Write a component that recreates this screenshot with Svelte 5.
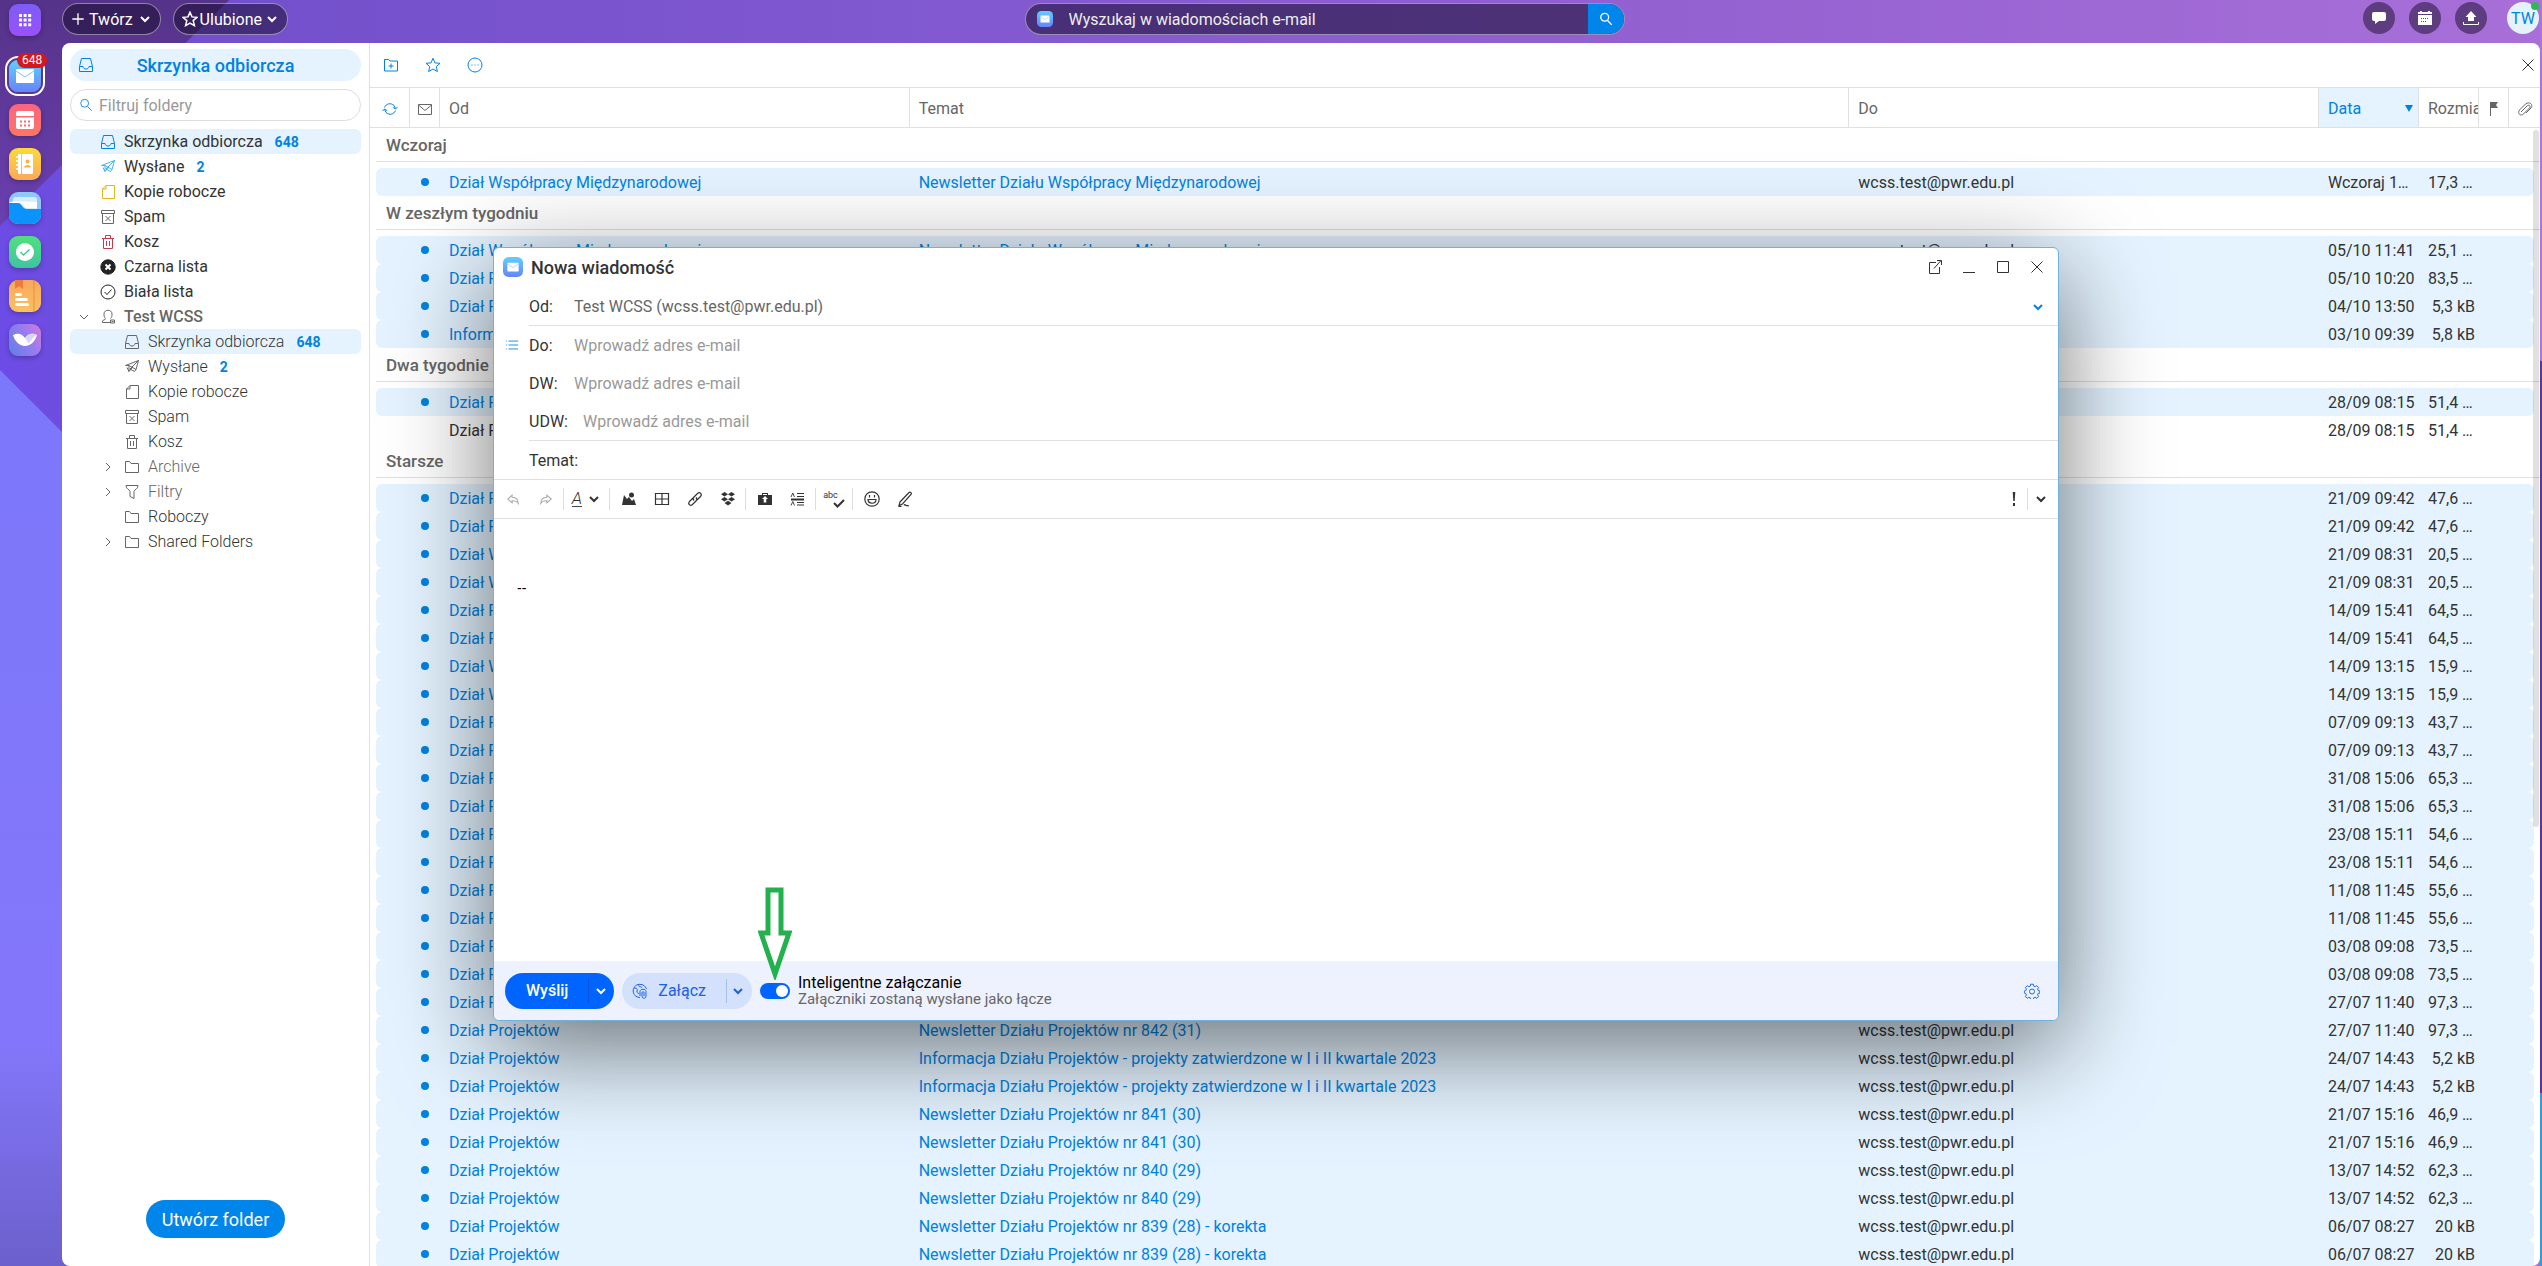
<script lang="ts">
	type Folder = {
		icon: string;
		label: string;
		level: number;
		count?: number;
		tone?: string;
		arrow?: 'down' | 'right';
		active?: boolean;
	};

	type Mail = {
		from: string;
		subject: string;
		date: string;
		size: string;
		read?: boolean;
	};

	// stroke paths on a 16x16 grid
	const icons: Record<string, string> = {
		inbox: 'M3.5 1.5h9l2 8v5h-13v-5zM1.5 9.5H5c.6 3.4 5.4 3.4 6 0h3.500',
		sent: 'M1.500 6.500 14.500 1.500l-2.500 9-7-4zM5 7v5.500l3-3.500M14.500 1.500 6 10l4.500 2.500 1.500-2M3 8.500l2 4',
		draft: 'M6 1.500h8.500v13h-12V5zM6 1.500V5H2.500',
		spam: 'M1.500 1.500h13v3h-13zM2.500 4.500h11v10h-11zM5.500 7l5 5M10.500 7l-5 5',
		trash: 'M2 4.500h12M5.500 4.500v-3h5v3M3.500 4.500v10h9v-10M6.500 7v5M9.500 7v5',
		allow: 'M8 1a7 7 0 1 0 0 14A7 7 0 0 0 8 1zM4.500 8l2.500 2.500 4.500-5',
		account: 'M10 13.500H2.500v-1.500c0-1 3-1 3-2.500C4 8 4 6.500 4 5c0-5 8-5 8 0 0 2 0 3-1.500 4.500M10.500 11h4v3h-4zM11.500 12.500h2',
		folder: 'M1.500 2.500h4l1.500 2h7.500v9h-13z',
		filter: 'M2 1.500h12c0 4-4 4-4 6v7l-4-2v-5c0-2-4-2-4-6z',
		addFolder: 'M1.500 2.500h4l1.500 1.500h7.500v10h-13zM8 6.500v5M5.500 9h5',
		star: 'M8 1.200l2 4.700 5 .4-3.800 3.300 1.200 5L8 12l-4.400 2.600 1.200-5L1 6.300l5-.4z',
		more: 'M8 1a7 7 0 1 0 0 14A7 7 0 0 0 8 1zM4.500 8h1M7.500 8h1M10.500 8h1',
		refresh: 'M2.500 6.500C4 2.500 9 1.500 12 4.500l1.500 3M13.500 9.500c-1.500 4-6.500 5-9.500 2l-1.500-3M11 6.500l2.500 1.500L15.500 6M.500 10l2-2 2.500 1.500',
		mail: 'M1.500 3.500h13v10h-13zM1.500 4 8 9.500 14.500 4',
		search: 'M6.500 1.500a4.500 4.500 0 1 0 0 9 4.500 4.500 0 0 0 0-9zM10 10l4.500 4.500',
		clip: 'M4 11l6-6c2-2 4 0 2.500 2l-6 6c-3 2.500-6.500-.5-4-4l6-6c4-3 8 .5 5.500 4l-5 5',
		close: 'M2.500 2.500l11 11M13.500 2.500l-11 11',
		popout: 'M9 3.500H2.500v11h10V8M7 9.500l7-8M10 1.500h4.500V6',
		minimise: 'M2 13.500h12',
		maximise: 'M2.500 2.500h11v11h-11z',
		down: 'M4 6l4 4 4-4',
		right: 'M6 4l4 4-4 4',
		plus: 'M8 1.500v13M1.500 8h13',
		list: 'M1 3.500h1M4 3.500h11M1 8h1M4 8h11M1 12.500h1M4 12.500h11',
		undo: 'M7 3.500 2 8l5 4.500V10c4 0 5.500.5 7 3 0-4-2.500-7-7-7z',
		redo: 'M9 3.500 14 8l-5 4.500V10c-4 0-5.500.5-7 3 0-4 2.500-7 7-7z',
		table: 'M1.500 2.500h13v11h-13zM8 2.500v11M1.500 8h13',
		link: 'M7 9.500c-1-1-1-2.500 0-3.500l3.500-3.500c2.500-2 5 .5 3 3L10 9M9 6.500c1 1 1 2.500 0 3.500l-3.500 3.500c-2.500 2-5-.5-3-3L6 7',
		emoji: 'M8 .8a7.200 7.200 0 1 0 0 14.400A7.200 7.200 0 0 0 8 .8zM4 8.500h8c0 5-8 5-8 0zM5.500 4v2.500M10.500 4v2.500',
		pen: 'M3 11l9-9.500c1.500-1 3 .5 2 2L5.500 13 2 14.500zM1.500 15.300h3M7 14.500c1-2 2 .5 3 0l2 .500',
		attach: 'M8 14.500C-1 14-1 2 7.500 1.300c4 0 6 2 7 4.700M2 5c3 0 4 1 3 3s2 2 2 3M7 1.500c-1 3 2 2 3 3M8 13V8.500c0-3 6-3 6 0v4.500c0 3-4 3-4 0V9.500c0-1 2-1 2 0v3.500',
		gear: 'M6.700 1.200h2.600l.4 1.900 1.500.6 1.600-1 1.800 1.800-1 1.600.6 1.500 1.800.4v2l-1.800.4-.6 1.500 1 1.600-1.800 1.800-1.600-1-1.500.6-.4 1.800H6.700l-.4-1.800-1.500-.6-1.600 1-1.800-1.800 1-1.600-.6-1.500L.2 10V8l1.600-.4.6-1.500-1-1.600 1.800-1.800 1.600 1 1.500-.6zM8 6a2.500 2.500 0 1 0 0 5 2.500 2.500 0 0 0 0-5z'
	};

	const folders: Folder[] = [
		{ icon: 'inbox', label: 'Skrzynka odbiorcza', level: 0, count: 648, tone: 'blue', active: true },
		{ icon: 'sent', label: 'Wysłane', level: 0, count: 2, tone: 'sky' },
		{ icon: 'draft', label: 'Kopie robocze', level: 0, tone: 'yellow' },
		{ icon: 'spam', label: 'Spam', level: 0 },
		{ icon: 'trash', label: 'Kosz', level: 0, tone: 'red' },
		{ icon: 'block', label: 'Czarna lista', level: 0, tone: 'dark' },
		{ icon: 'allow', label: 'Biała lista', level: 0, tone: 'dark' },
		{ icon: 'account', label: 'Test WCSS', level: 0, tone: 'account', arrow: 'down' },
		{ icon: 'inbox', label: 'Skrzynka odbiorcza', level: 1, count: 648, active: true },
		{ icon: 'sent', label: 'Wysłane', level: 1, count: 2 },
		{ icon: 'draft', label: 'Kopie robocze', level: 1 },
		{ icon: 'spam', label: 'Spam', level: 1 },
		{ icon: 'trash', label: 'Kosz', level: 1 },
		{ icon: 'folder', label: 'Archive', level: 1, tone: 'muted', arrow: 'right' },
		{ icon: 'filter', label: 'Filtry', level: 1, tone: 'muted', arrow: 'right' },
		{ icon: 'folder', label: 'Roboczy', level: 1 },
		{ icon: 'folder', label: 'Shared Folders', level: 1, arrow: 'right' }
	];

	const projects = 'Dział Projektów';
	const abroad = 'Dział Współpracy Międzynarodowej';
	const abroadNews = 'Newsletter Działu Współpracy Międzynarodowej';
	const projectNews = 'Newsletter Działu Projektów';
	const contests = 'Informacja Działu Projektów - projekty zatwierdzone w I i II kwartale 2023';

	function twice(from: string, subject: string, date: string, size: string): Mail[] {
		const mail = { from, subject, date, size };
		return [mail, { ...mail }];
	}

	const groups: { title: string; mails: Mail[] }[] = [
		{
			title: 'Wczoraj',
			mails: [{ from: abroad, subject: abroadNews, date: 'Wczoraj 1…', size: '17,3 …' }]
		},
		{
			title: 'W zeszłym tygodniu',
			mails: [
				{ from: abroad, subject: abroadNews, date: '05/10 11:41', size: '25,1 …' },
				{ from: projects, subject: projectNews, date: '05/10 10:20', size: '83,5 …' },
				{ from: projects, subject: projectNews, date: '04/10 13:50', size: '5,3 kB' },
				{ from: 'Informacje', subject: 'Informacje', date: '03/10 09:39', size: '5,8 kB' }
			]
		},
		{
			title: 'Dwa tygodnie temu',
			mails: [
				{ from: projects, subject: projectNews, date: '28/09 08:15', size: '51,4 …' },
				{ from: projects, subject: projectNews, date: '28/09 08:15', size: '51,4 …', read: true }
			]
		},
		{
			title: 'Starsze',
			mails: [
				...twice(projects, projectNews, '21/09 09:42', '47,6 …'),
				...twice(abroad, abroadNews, '21/09 08:31', '20,5 …'),
				...twice(projects, projectNews, '14/09 15:41', '64,5 …'),
				...twice(abroad, abroadNews, '14/09 13:15', '15,9 …'),
				...twice(projects, projectNews, '07/09 09:13', '43,7 …'),
				...twice(projects, projectNews, '31/08 15:06', '65,3 …'),
				...twice(projects, projectNews, '23/08 15:11', '54,6 …'),
				...twice(projects, projectNews, '11/08 11:45', '55,6 …'),
				...twice(projects, projectNews, '03/08 09:08', '73,5 …'),
				...twice(projects, 'Newsletter Działu Projektów nr 842 (31)', '27/07 11:40', '97,3 …'),
				...twice(projects, contests, '24/07 14:43', '5,2 kB'),
				...twice(projects, 'Newsletter Działu Projektów nr 841 (30)', '21/07 15:16', '46,9 …'),
				...twice(projects, 'Newsletter Działu Projektów nr 840 (29)', '13/07 14:52', '62,3 …'),
				...twice(projects, 'Newsletter Działu Projektów nr 839 (28) - korekta', '06/07 08:27', '20 kB')
			]
		}
	];

	let search = $state('');
	let folderFilter = $state('');
	let smartAttach = $state(true);
	let body = $state('\n\n--');
</script>

{#snippet icon(name: string, size: number = 16)}
	<svg class="icon" width={size} height={size} viewBox="0 0 16 16" aria-hidden="true">
		{#if name === 'block'}
			<circle cx="8" cy="8" r="7.200" fill="currentColor" />
			<path d="M5.500 5.500l5 5M10.500 5.500l-5 5" stroke="#fff" stroke-width="2" />
		{:else}
			<path d={icons[name]} />
		{/if}
	</svg>
{/snippet}

{#snippet mailLogo(size: number)}
	<svg width={size} height={size} viewBox="0 0 32 32" aria-hidden="true">
		<defs>
			<linearGradient id="mail-{size}" x1="0" y1="0" x2="0" y2="1">
				<stop offset="0" stop-color="#5fd0fb" />
				<stop offset="1" stop-color="#6684f8" />
			</linearGradient>
		</defs>
		<rect width="32" height="32" rx="9" fill="url(#mail-{size})" />
		<rect x="7" y="9" width="18" height="14" rx="1" fill="#fff" />
		<path d="M7 11l9 6 9-6" fill="none" stroke="#8fbcf8" />
	</svg>
{/snippet}

<div class="desktop">
	<svg class="wallpaper" width="300" height="2000" aria-hidden="true">
		<defs>
			<linearGradient id="dusk" x1="0" y1="0" x2="0" y2="1">
				<stop offset="0" stop-color="#553388" />
				<stop offset="1" stop-color="#6a3fb0" />
			</linearGradient>
			<linearGradient id="dawn" gradientUnits="userSpaceOnUse" x1="0" y1="370" x2="0" y2="1266">
				<stop offset="0" stop-color="#7c78fb" />
				<stop offset="0.750" stop-color="#8476fa" />
				<stop offset="1" stop-color="#6c60cc" />
			</linearGradient>
		</defs>
		<path d="M0 0h229L0 226z" fill="url(#dusk)" />
		<path d="M0 370l300 300v1330H0z" fill="url(#dawn)" />
	</svg>

	<nav class="rail" aria-label="Aplikacje">
		<button class="app launcher" aria-label="Menu">
			<svg width="32" height="32" viewBox="0 0 32 32" fill="#fff">
				{#each [10, 14.6, 19.2] as y}
					{#each [10, 14.6, 19.2] as x}
						<rect {x} {y} width="3" height="3" rx="0.500" />
					{/each}
				{/each}
			</svg>
		</button>
		<button class="app current" aria-label="Poczta">
			{@render mailLogo(32)}
			<span class="unread">648</span>
		</button>
		<button class="app calendar" aria-label="Kalendarz">
			<svg width="32" height="32" viewBox="0 0 32 32" fill="#fff">
				<path d="M7 9a2 2 0 0 1 2-2h14a2 2 0 0 1 2 2v3H7zM7 13.500h18V23a2 2 0 0 1-2 2H9a2 2 0 0 1-2-2z" />
				<path d="M11 17.500h12M11 21.500h12" stroke="#fc6a72" stroke-width="2" stroke-dasharray="2 2" />
			</svg>
		</button>
		<button class="app contacts" aria-label="Kontakty">
			<svg width="32" height="32" viewBox="0 0 32 32" fill="#fff">
				<rect x="9" y="6" width="3" height="20" />
				<rect x="13" y="6" width="11" height="20" rx="1" />
				<path d="M7 9h4M7 13h4M7 17h4M7 21h4" stroke="#fff" stroke-width="1.500" />
				<circle cx="18.500" cy="13.500" r="2" fill="#fbb13c" />
				<path d="M15 19.500c0-3.500 7-3.500 7 0z" fill="#fbb13c" />
			</svg>
		</button>
		<button class="app files" aria-label="Pliki">
			<svg width="32" height="32" viewBox="0 0 32 32">
				<path d="M4 8a3 3 0 0 1 3-3h18a3 3 0 0 1 3 3v9H4z" fill="#d6ebfc" />
				<path d="M0 11h11l6 5h11v-6l-24-1z" fill="#fff" />
				<path d="M0 11h9c4 0 4 6 9 6h14v6a9 9 0 0 1-9 9H9a9 9 0 0 1-9-9z" fill="#0a94fb" />
			</svg>
		</button>
		<button class="app tasks" aria-label="Zadania">
			<svg width="32" height="32" viewBox="0 0 32 32">
				<circle cx="16" cy="16" r="9" fill="#fff" />
				<path d="M11.500 16l3 3 6-5.500" fill="none" stroke="#3fcf94" stroke-width="1.500" />
			</svg>
		</button>
		<button class="app notes" aria-label="Notatki">
			<svg width="32" height="32" viewBox="0 0 32 32">
				<path d="M25 0v32" stroke="#e98f3c" />
				<path d="M6 0h8v9l-4-3-4 3z" fill="#ee7c3b" />
				<path d="M7.500 14.500h4M7.500 19.500h10M7.500 24.500h11" stroke="#fff" stroke-width="3" stroke-linecap="round" />
			</svg>
		</button>
		<button class="app chat" aria-label="Czat">
			<svg width="32" height="32" viewBox="0 0 32 32">
				<path d="M4 11c5-2 8-2 12 3 4-5 7-5 12-3-2 7-7 11-12 11S6 18 4 11z" fill="#fff" />
				<path d="M16 14c4-5 7-5 12-3-4 2-7 6-8 9z" fill="#d9d4fb" />
			</svg>
		</button>
	</nav>

	<div class="workspace">
		<header class="topbar">
			<div class="topbar-left">
				<button class="pill">{@render icon('plus', 14)} Twórz {@render icon('down')}</button>
				<button class="pill favourites">{@render icon('star')}Ulubione {@render icon('down')}</button>
			</div>
			<form class="search">
				{@render mailLogo(16)}
				<input type="text" aria-label="Szukaj" placeholder="Wyszukaj w wiadomościach e-mail" bind:value={search} />
				<button type="button" aria-label="Wyszukaj">{@render icon('search', 14)}</button>
			</form>
			<div class="topbar-right">
				<button class="round" aria-label="Czat">
					<svg width="16" height="16" viewBox="0 0 16 16"><path d="M3 2h10a2 2 0 0 1 2 2v5a2 2 0 0 1-2 2H8l-4 3v-3H3a2 2 0 0 1-2-2V4a2 2 0 0 1 2-2z" fill="#fff" /></svg>
				</button>
				<button class="round" aria-label="Kalendarz">
					<svg width="16" height="16" viewBox="0 0 16 16">
						<path d="M1 2h14v2H1zM1 5h14v10H1zM3 1h2v2H3zM11 1h2v2h-2z" fill="#fff" />
						<path d="M4 8.500h8M4 11.500h6" stroke="#5b3d80" stroke-dasharray="1 1" />
					</svg>
				</button>
				<button class="round" aria-label="Wyślij plik">
					<svg width="16" height="16" viewBox="0 0 16 16">
						<path d="M8 1l5.500 6H11v4H5V7H2.500z" fill="#fff" />
						<path d="M.5 12v2.500h15V12" fill="none" stroke="#fff" />
					</svg>
				</button>
				<button class="avatar">TW<span class="online"></span></button>
			</div>
		</header>

		<main class="panel">
			<aside class="sidebar">
				<h1 class="mailbox">{@render icon('inbox')}<span>Skrzynka odbiorcza</span></h1>
				<label class="filter">
					{@render icon('search', 14)}
					<input type="text" aria-label="Filtruj foldery" placeholder="Filtruj foldery" bind:value={folderFilter} />
				</label>
				<ul class="folders">
					{#each folders as folder}
						<li class="folder level-{folder.level} {folder.tone ?? ''}" class:active={folder.active}>
							<span class="arrow">
								{#if folder.arrow}{@render icon(folder.arrow)}{/if}
							</span>
							{@render icon(folder.icon)}
							<span class="label">{folder.label}</span>
							{#if folder.count}
								<span class="count" class:single={folder.count < 10}>{folder.count}</span>
							{/if}
						</li>
					{/each}
				</ul>
				<button class="create-folder">Utwórz folder</button>
			</aside>

			<section class="mails">
				<div class="toolbar">
					<button aria-label="Nowy folder">{@render icon('addFolder')}</button>
					<button aria-label="Dodaj do ulubionych">{@render icon('star')}</button>
					<button aria-label="Więcej">{@render icon('more')}</button>
					<button class="close-tab" aria-label="Zamknij">{@render icon('close')}</button>
				</div>

				<table>
					<colgroup>
						<col class="w-edge" />
						<col class="w-refresh" />
						<col class="w-mark" />
						<col />
						<col class="w-subject" />
						<col />
						<col class="w-date" />
						<col class="w-size" />
						<col class="w-mark" />
						<col class="w-clip" />
						<col class="w-edge" />
					</colgroup>
					<thead>
						<tr>
							<th colspan="2" class="mid blue">{@render icon('refresh')}</th>
							<th class="mid">{@render icon('mail')}</th>
							<th>Od</th>
							<th>Temat</th>
							<th>Do</th>
							<th class="sorted"><span class="sort">Data <span class="triangle"></span></span></th>
							<th>Rozmiar</th>
							<th class="mid">
								<svg width="16" height="16" viewBox="0 0 16 16"><path d="M4 1h8l-2 3 2 3H5v8H4z" fill="#666" /></svg>
							</th>
							<th colspan="2" class="mid">{@render icon('clip')}</th>
						</tr>
					</thead>
					<tbody>
						{#each groups as group}
							<tr class="group">
								<td></td>
								<td colspan="10"><div class="group-title">{group.title}</div></td>
							</tr>
							{#each group.mails as mail}
								<tr class="mail" class:read={mail.read}>
									<td class="edge"></td>
									<td class="first"></td>
									<td class="mark">
										{#if !mail.read}<span class="dot"></span>{/if}
									</td>
									<td class="from">{mail.from}</td>
									<td class="subject">{mail.subject}</td>
									<td>wcss.test@pwr.edu.pl</td>
									<td>{mail.date}</td>
									<td class="size" class:whole={!mail.size.endsWith('…')}>{mail.size}</td>
									<td></td>
									<td class="last"></td>
									<td class="edge"></td>
								</tr>
							{/each}
						{/each}
					</tbody>
				</table>
				<div class="scroll-thumb"></div>
			</section>
		</main>
	</div>

	<div class="compose" role="dialog" aria-labelledby="compose-title">
		<div class="titlebar">
			{@render mailLogo(20)}
			<h2 id="compose-title">Nowa wiadomość</h2>
			<div class="window-buttons">
				<button aria-label="Otwórz w nowym oknie">{@render icon('popout')}</button>
				<button aria-label="Minimalizuj">{@render icon('minimise')}</button>
				<button aria-label="Maksymalizuj">{@render icon('maximise')}</button>
				<button aria-label="Zamknij okno">{@render icon('close')}</button>
			</div>
		</div>

		<div class="fields">
			<div class="field from-field">
				<span class="field-label">Od:</span>
				<span class="sender">Test WCSS (wcss.test@pwr.edu.pl)</span>
				<button class="open-list" aria-label="Wybierz nadawcę">{@render icon('down')}</button>
			</div>
			<div class="recipients">
				<button class="contacts-list" aria-label="Lista kontaktów">{@render icon('list', 14)}</button>
				<div class="field">
					<label for="to">Do:</label>
					<input id="to" type="text" placeholder="Wprowadź adres e-mail" />
				</div>
				<div class="field">
					<label for="cc">DW:</label>
					<input id="cc" type="text" placeholder="Wprowadź adres e-mail" />
				</div>
				<div class="field">
					<label for="bcc">UDW:</label>
					<input id="bcc" type="text" placeholder="Wprowadź adres e-mail" />
				</div>
			</div>
			<div class="field subject-field">
				<label for="subject">Temat:</label>
				<input id="subject" type="text" />
			</div>
		</div>

		<div class="format">
			<button class="faded" aria-label="Cofnij">{@render icon('undo', 14)}</button>
			<button class="faded" aria-label="Ponów">{@render icon('redo', 14)}</button>
			<span class="sep"></span>
			<button class="font-button" aria-label="Czcionka"><i>A</i>{@render icon('down')}</button>
			<span class="sep"></span>
			<button aria-label="Obraz">
				<svg width="16" height="16" viewBox="0 0 16 16" fill="currentColor"><path d="M1 14 3 4l3 4 2-2 3 4 2-2 2 6z" /><circle cx="10.500" cy="4" r="2.500" /></svg>
			</button>
			<button aria-label="Tabela">{@render icon('table')}</button>
			<button aria-label="Odnośnik">{@render icon('link')}</button>
			<button aria-label="Dropbox">
				<svg width="16" height="16" viewBox="0 0 16 16" fill="currentColor"><path d="M4.500 1 8 3.300 4.500 5.600 1 3.300zM11.500 1 15 3.300l-3.500 2.300L8 3.300zM4.500 6 8 8.300l-3.500 2.300L1 8.300zM11.500 6 15 8.300l-3.500 2.300L8 8.300zM8 9.800l3.500 2.200L8 14.500 4.500 12z" /></svg>
			</button>
			<span class="sep"></span>
			<button aria-label="Wstaw plik">
				<svg width="16" height="16" viewBox="0 0 16 16"><path d="M1 4h4V2h6v2h4v10H1zM6 3v1h4V3z" fill="currentColor" fill-rule="evenodd" /><path d="M8 5l3 3H9.300v3.500H6.700V8H5z" fill="#fff" /></svg>
			</button>
			<button aria-label="Styl">
				<svg width="16" height="16" viewBox="0 0 16 16" fill="none" stroke="currentColor"><path d="M1 6l1.800-4L4.500 6M1 14.500l1.800-4 1.700 4" stroke-width="0.900" /><path d="M7 2.500h7M7 5.500h7M7 11.500h7M7 14h7" /><path d="M1 8.500h13" stroke-width="2" /></svg>
			</button>
			<span class="sep"></span>
			<button class="spell" aria-label="Sprawdź pisownię">
				<span>abc</span>
				<svg width="12" height="9" viewBox="0 0 12 9"><path d="M1 4l3.500 3.500L11 1" fill="none" stroke="currentColor" stroke-width="2" /></svg>
			</button>
			<span class="sep"></span>
			<button aria-label="Emotikony">{@render icon('emoji')}</button>
			<button aria-label="Podpis">{@render icon('pen')}</button>
			<button class="priority" aria-label="Ważność">
				<svg width="4" height="14" viewBox="0 0 4 14" fill="currentColor"><path d="M.7 0h2.600L2.700 9H1.300zM1 11h2v3H1z" /></svg>
			</button>
			<span class="sep"></span>
			<button aria-label="Więcej opcji">{@render icon('down')}</button>
		</div>

		<textarea class="body" aria-label="Treść" bind:value={body}></textarea>

		<footer class="actions">
			<div class="split primary">
				<button>Wyślij</button>
				<button class="more" aria-label="Opcje wysyłania">{@render icon('down')}</button>
			</div>
			<div class="split secondary">
				<button>{@render icon('attach')}Załącz</button>
				<button class="more" aria-label="Opcje załączania">{@render icon('down')}</button>
			</div>
			<label class="smart">
				<input type="checkbox" role="switch" bind:checked={smartAttach} />
				<span>
					<span class="smart-title">Inteligentne załączanie</span>
					<span class="smart-note">Załączniki zostaną wysłane jako łącze</span>
				</span>
			</label>
			<button class="settings" aria-label="Ustawienia">{@render icon('gear')}</button>

			<!-- hand-drawn pointer to the switch -->
			<svg class="pointer" width="34" height="94" viewBox="0 0 34 94" aria-hidden="true">
				<path d="M10 4h13v43h8L17 88 3 47h7z" />
			</svg>
		</footer>
	</div>
</div>

<style>
	:global(body) {
		margin: 0;
		overflow: hidden;
	}

	.desktop,
	.desktop :is(button, input, textarea) {
		font-family: Roboto, 'Noto Sans', sans-serif;
		font-size: 16px;
		color: #333;
	}

	.desktop {
		--blue: #0082e0;
		--tint: #e4f3ff;
		--line: #e0e0e0;
		position: relative;
		display: flex;
		height: 100vh;
		overflow: hidden;
		background:
			linear-gradient(#ad72dc 0 361px, #5a359a 361px 1093px, #349ad8 1093px) right / 2px 100% no-repeat,
			linear-gradient(90deg, #6c4ce6 0, #7350cc 240px, #8058d0 900px, #9260d0 1600px, #a86fd8 100%);
	}

	button {
		display: inline-flex;
		align-items: center;
		justify-content: center;
		padding: 0;
		border: 0;
		background: none;
		cursor: pointer;
	}

	input,
	textarea {
		min-width: 0;
		padding: 0;
		border: 0;
		outline: 0;
		background: none;
	}

	input::placeholder {
		color: #999;
		opacity: 1;
	}

	.icon {
		flex: none;
		fill: none;
		stroke: currentColor;
	}

	.wallpaper {
		position: absolute;
		top: 0;
		left: 0;
	}

	/* app rail */
	.rail {
		position: relative;
		display: flex;
		flex: none;
		flex-direction: column;
		gap: 12px;
		box-sizing: border-box;
		width: 62px;
		padding: 4px 0 0 9px;
	}

	.app {
		position: relative;
		width: 32px;
		height: 32px;
		border-radius: 9px;
		box-shadow: 0 2px 5px rgba(0, 0, 0, 0.25);
	}

	.launcher {
		margin-bottom: 12px;
		background: linear-gradient(#7d5cf8, #9a50f8);
	}

	.current {
		box-shadow:
			0 0 0 2px #5a3790,
			0 0 0 4px #fff;
	}

	.unread {
		position: absolute;
		top: -7px;
		left: 8px;
		padding: 0 5px;
		border-radius: 8px;
		background: #d4181f;
		color: #fff;
		font-size: 12px;
		line-height: 15px;
	}

	.calendar {
		background: linear-gradient(#fb6580, #fd7566);
	}

	.contacts {
		background: linear-gradient(#fbdb38, #fba85a);
	}

	.files {
		background: #8ec8f8;
	}

	.tasks {
		background: linear-gradient(#50e07c, #3fc4a4);
	}

	.notes {
		background: linear-gradient(#f8a85c, #fbc060);
	}

	.chat {
		background: linear-gradient(60deg, #5c80e4, #9a7cf0 60%, #d878d8);
	}

	/* top bar */
	.workspace {
		position: relative;
		display: flex;
		flex: 1;
		flex-direction: column;
		min-width: 0;
	}

	.topbar {
		display: grid;
		grid-template-columns: calc(50% - 276px) 600px 1fr;
		align-items: start;
		height: 40px;
		padding: 3px 3px 0 0;
	}

	.topbar-left {
		display: flex;
		gap: 12px;
	}

	.pill {
		gap: 4px;
		height: 32px;
		padding: 0 7px 0 8px;
		border: 1px solid rgba(255, 255, 255, 0.45);
		border-radius: 16px;
		background: rgba(20, 10, 40, 0.5);
	}

	.topbar .pill {
		color: #fff;
	}

	.pill .icon {
		stroke-width: 1.5;
	}

	.pill .icon:last-child {
		stroke-width: 2;
	}

	.favourites {
		gap: 2px;
	}

	.search {
		display: flex;
		align-items: center;
		box-sizing: border-box;
		height: 32px;
		padding-left: 11px;
		border: 1px solid rgba(255, 255, 255, 0.45);
		border-radius: 16px;
		background: rgba(40, 25, 70, 0.65);
		overflow: hidden;
	}

	.search input {
		flex: 1;
		margin-left: 16px;
		color: #fff;
	}

	.search input::placeholder {
		color: #eee;
	}

	.search button {
		width: 36px;
		height: 32px;
		background: #0085ea;
		color: #fff;
	}

	.search .icon {
		stroke-width: 1.5;
	}

	.topbar-right {
		display: flex;
		justify-content: flex-end;
		gap: 14px;
		margin-top: -1px;
	}

	.round {
		width: 32px;
		height: 32px;
		border-radius: 50%;
		background: #5d3d80;
	}

	.topbar .avatar {
		position: relative;
		width: 32px;
		height: 32px;
		margin-left: 6px;
		border-radius: 50%;
		background: #e4f2fd;
		color: var(--blue);
	}

	.online {
		position: absolute;
		top: 0;
		right: 0;
		width: 8px;
		height: 8px;
		border-radius: 50%;
		background: #2fb757;
	}

	/* panel */
	.panel {
		display: flex;
		flex: 1;
		min-height: 0;
		margin-right: 2px;
		border-radius: 8px;
		background: #fff;
		overflow: hidden;
	}

	.sidebar {
		display: flex;
		flex: none;
		flex-direction: column;
		box-sizing: border-box;
		width: 308px;
		padding: 6px 8px 28px;
		border-right: 1px solid var(--line);
	}

	.mailbox {
		display: flex;
		align-items: center;
		height: 32px;
		margin: 0 0 8px;
		padding: 0 8px;
		border-radius: 16px;
		background: var(--tint);
		color: var(--blue);
		font-size: 18px;
		font-weight: 500;
	}

	.mailbox span {
		flex: 1;
		padding-right: 16px;
		text-align: center;
	}

	.filter {
		display: flex;
		align-items: center;
		gap: 6px;
		box-sizing: border-box;
		height: 32px;
		padding: 0 8px;
		border: 1px solid #ddd;
		border-radius: 16px;
		color: var(--blue);
	}

	.folders {
		flex: 1;
		margin: 8px 0 0;
		padding: 0;
		list-style: none;
	}

	.folder {
		display: flex;
		align-items: center;
		height: 25px;
		padding-left: 6px;
		border-radius: 6px;
		line-height: 26px;
	}

	.folder .icon {
		color: #666;
	}

	.level-1 {
		padding-left: 30px;
		font-weight: 300;
	}

	.active {
		background: var(--tint);
	}

	.arrow {
		display: flex;
		width: 16px;
		margin-right: 8px;
	}

	.label {
		margin-left: 8px;
	}

	.blue > .icon {
		color: var(--blue);
	}

	.sky > .icon {
		color: #45b4e4;
	}

	.yellow > .icon {
		color: #e0b818;
	}

	.red > .icon {
		color: #c83a50;
	}

	.dark > .icon {
		color: #222;
	}

	.account {
		color: #666;
		font-weight: 500;
	}

	.muted {
		color: #666;
	}

	.count {
		margin-left: 12px;
		color: var(--blue);
		font-size: 14px;
		font-weight: 700;
	}

	.single {
		margin-left: 8px;
		padding: 0 4px;
		border-radius: 8px;
		box-shadow: 0 0 0 1px #f0f7fe;
		line-height: 16px;
	}

	.sidebar .create-folder {
		align-self: center;
		height: 38px;
		padding: 0 16px;
		border-radius: 19px;
		background: #0085ea;
		color: #fff;
		font-size: 18px;
	}

	/* message list */
	.mails {
		position: relative;
		flex: 1;
		min-width: 0;
	}

	.toolbar {
		display: flex;
		align-items: center;
		gap: 26px;
		height: 44px;
		padding: 0 4px 0 13px;
		border-bottom: 1px solid var(--line);
	}

	.toolbar button {
		color: var(--blue);
	}

	.toolbar .close-tab {
		margin-left: auto;
		color: #333;
	}

	table {
		width: 100%;
		table-layout: fixed;
		border-collapse: separate;
		border-spacing: 0;
	}

	.w-edge {
		width: 6px;
	}

	.w-refresh {
		width: 34px;
	}

	.w-mark {
		width: 30px;
	}

	.w-subject {
		width: 43.3%;
	}

	.w-date {
		width: 100px;
	}

	.w-size {
		width: 60px;
	}

	.w-clip {
		width: 25px;
	}

	th {
		box-sizing: border-box;
		height: 40px;
		padding: 1px 0 0 9px;
		border-right: 1px solid var(--line);
		border-bottom: 1px solid var(--line);
		color: #666;
		font-weight: 400;
		text-align: left;
		white-space: nowrap;
		overflow: hidden;
	}

	th:last-child {
		border-right: 0;
	}

	th.mid {
		padding: 0;
		text-align: center;
	}

	th.blue {
		color: var(--blue);
	}

	th svg {
		vertical-align: middle;
	}

	th.sorted {
		background: var(--tint);
		color: var(--blue);
	}

	.sort {
		display: flex;
		align-items: center;
		justify-content: space-between;
		padding-right: 5px;
	}

	.triangle {
		border: 4px solid transparent;
		border-top: 7px solid var(--blue);
		border-bottom: 0;
	}

	td {
		padding: 0;
		white-space: nowrap;
		overflow: hidden;
	}

	.group-title {
		height: 33px;
		margin-bottom: 6px;
		padding-left: 10px;
		border-bottom: 1px solid var(--line);
		color: #666;
		font-size: 17px;
		font-weight: 500;
		line-height: 34px;
	}

	.mail td {
		height: 28px;
		padding-left: 9px;
		background: var(--tint);
	}

	.mail td.edge,
	.mail.read td {
		background: none;
	}

	.mail td.edge,
	.mail td.first,
	.mail td.last {
		padding: 0;
	}

	.mail .first {
		border-radius: 6px 0 0 6px;
	}

	.mail .last {
		border-radius: 0 6px 6px 0;
	}

	.mail td.mark {
		padding: 0 0 0 11px;
	}

	.dot {
		display: block;
		width: 8px;
		height: 8px;
		border-radius: 50%;
		background: var(--blue);
	}

	.mail .from,
	.mail .subject {
		color: var(--blue);
	}

	.read .from,
	.read .subject {
		color: #333;
	}

	.mail .whole {
		padding-right: 4px;
		text-align: right;
	}

	.scroll-thumb {
		position: absolute;
		top: 87px;
		right: 1px;
		width: 6px;
		height: 57%;
		border-radius: 3px;
		background: rgba(0, 0, 0, 0.12);
	}

	/* compose window */
	.compose {
		position: absolute;
		top: 247px;
		right: 483px;
		bottom: 245px;
		left: 493px;
		display: flex;
		flex-direction: column;
		box-sizing: border-box;
		border: 1px solid #6fb2e0;
		border-radius: 6px;
		background: #fff;
		box-shadow: 0 25px 100px rgba(0, 0, 0, 0.55);
	}

	.titlebar {
		display: flex;
		align-items: center;
		gap: 8px;
		box-sizing: border-box;
		height: 40px;
		padding: 0 13px 2px 9px;
	}

	.titlebar h2 {
		margin: 0;
		font-size: 18px;
		font-weight: 500;
	}

	.window-buttons {
		display: flex;
		gap: 18px;
		margin-left: auto;
	}

	.fields {
		padding-left: 35px;
	}

	.field {
		display: flex;
		align-items: center;
		height: 38px;
	}

	.field label,
	.field-label {
		min-width: 38px;
		margin-right: 7px;
	}

	.field label[for='bcc'] {
		margin-right: 15px;
	}

	.field input {
		flex: 1;
	}

	.from-field {
		height: 37px;
		border-bottom: 1px solid var(--line);
	}

	.sender {
		color: #666;
	}

	.open-list {
		margin: 0 12px 0 auto;
	}

	.open-list .icon {
		color: var(--blue);
		stroke-width: 2;
	}

	.recipients {
		position: relative;
		border-bottom: 1px solid var(--line);
	}

	.contacts-list {
		position: absolute;
		top: 12px;
		left: -24px;
	}

	.contacts-list .icon {
		color: var(--blue);
	}

	.format {
		display: flex;
		align-items: center;
		box-sizing: border-box;
		height: 40px;
		padding: 0 6px 0 2px;
		border-top: 1px solid var(--line);
		border-bottom: 1px solid var(--line);
	}

	.format button {
		width: 33px;
		height: 30px;
	}

	.format .faded {
		color: #aaa;
	}

	.format .icon {
		stroke-width: 1.2;
	}

	.format .sep {
		width: 1px;
		height: 22px;
		margin: 0 2px 0 1px;
		background: #ddd;
	}

	.format .font-button {
		gap: 4px;
		width: 42px;
	}

	.font-button i {
		border-bottom: 1px solid #444;
		font-size: 17px;
		font-weight: 300;
		line-height: 15px;
	}

	.format button .icon:last-child:not(:first-child) {
		stroke-width: 2;
	}

	.spell {
		flex-direction: column;
	}

	.spell span {
		margin-left: -8px;
		font-size: 9px;
		line-height: 8px;
	}

	.spell svg {
		margin-left: 8px;
	}

	.format .priority {
		width: 24px;
		margin-left: auto;
	}

	.format button:last-child {
		width: 22px;
	}

	.format button:last-child .icon {
		stroke-width: 2;
	}

	.compose .body {
		flex: 1;
		padding: 24px 23px;
		color: #000;
		font-family: 'Liberation Sans', Arial, sans-serif;
		font-size: 14px;
		line-height: 18px;
		resize: none;
	}

	/* compose footer */
	.actions {
		position: relative;
		display: flex;
		align-items: center;
		gap: 8px;
		height: 59px;
		padding: 0 18px 0 11px;
		border-radius: 0 0 6px 6px;
		background: #eef2fe;
	}

	.split {
		display: flex;
		align-items: center;
		height: 36px;
		border-radius: 18px;
	}

	.split button {
		height: 24px;
		gap: 10px;
		color: inherit;
	}

	.split .more {
		width: 26px;
		padding-right: 2px;
		border-left: 1px solid;
	}

	.split .more .icon {
		stroke-width: 2;
	}

	.primary {
		background: #0065ff;
		color: #fff;
	}

	.primary button {
		padding: 0 20px 0 21px;
		font-weight: 500;
	}

	.primary .more {
		padding: 0 2px 0 0;
		border-color: #0052d6;
	}

	.secondary {
		background: #d4e1fc;
		color: #1a62e0;
	}

	.secondary button:first-child {
		padding: 0 20px 0 10px;
	}

	.secondary .more {
		border-color: #a8bfe8;
	}

	.smart {
		display: flex;
		align-items: center;
		gap: 8px;
	}

	.smart input {
		width: 30px;
		height: 16px;
		margin: 0;
		border-radius: 8px;
		background: #bbb;
		appearance: none;
	}

	.smart input::before {
		content: '';
		display: block;
		width: 12px;
		height: 12px;
		margin: 2px;
		border-radius: 50%;
		background: #fff;
	}

	.smart input:checked {
		background: #0065ff;
	}

	.smart input:checked::before {
		margin-left: 16px;
	}

	.smart-title,
	.smart-note {
		display: block;
		line-height: 17px;
	}

	.smart-title {
		color: #000;
	}

	.smart-note {
		color: #666;
		font-size: 15px;
	}

	.settings {
		margin-left: auto;
	}

	.settings .icon {
		color: #1a6ae0;
	}

	.pointer {
		position: absolute;
		bottom: 40px;
		left: 264px;
		fill: none;
		stroke: #22b14c;
		stroke-width: 5;
	}
</style>
